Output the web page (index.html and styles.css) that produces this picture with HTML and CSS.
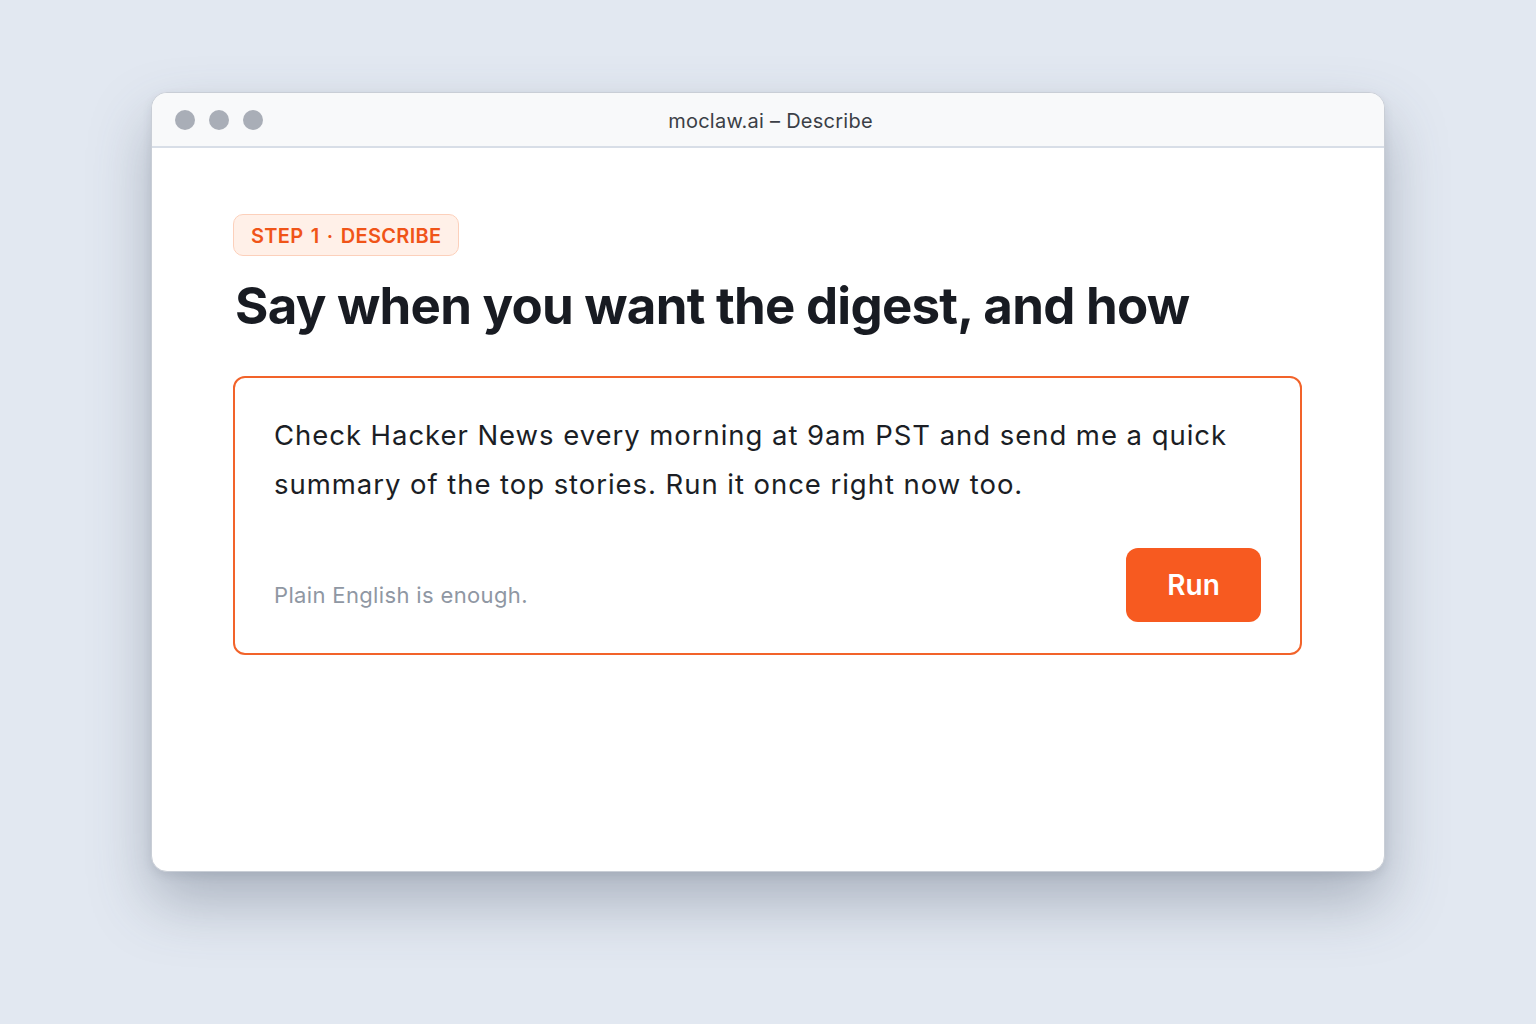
FILE: index.html
```html
<!DOCTYPE html>
<html lang="en">
<head>
    <meta charset="UTF-8">
    <meta name="viewport" content="width=device-width, initial-scale=1.0">
    <title>moclaw.ai – Describe</title>
    <link rel="stylesheet" href="styles.css">
</head>
<body>
    <div class="window">
        <div class="titlebar">
            <div class="dots">
                <span class="dot"></span>
                <span class="dot"></span>
                <span class="dot"></span>
            </div>
            <div class="title">moclaw.ai – Describe</div>
        </div>
        <div class="content">
            <div class="badge">STEP 1 · DESCRIBE</div>
            <h1 class="heading">Say when you want the digest, and how</h1>
            <div class="prompt">
                <p class="prompt-text">Check Hacker News every morning at 9am PST and send me a quick summary of the top stories. Run it once right now too.</p>
                <div class="prompt-footer">
                    <span class="hint">Plain English is enough.</span>
                    <button class="run">Run</button>
                </div>
            </div>
        </div>
    </div>
</body>
</html>
```

FILE: styles.css
```css
* {
    box-sizing: border-box;
}
body {
    margin: 0;
    height: 100vh;
    background-color: #e2e8f1;
    font-family: Inter, "Noto Sans", sans-serif;
    padding-top: 92px;
}
.window {
    width: 1234px;
    height: 780px;
    margin: 0 auto 0 151px;
    background: #fff;
    border: 1px solid #c9ced6;
    border-radius: 16px;
    overflow: hidden;
    box-shadow: 0 30px 60px rgba(70, 80, 100, 0.35), 0 4px 10px rgba(70, 80, 100, 0.12);
}
.titlebar {
    position: relative;
    height: 55px;
    background: #f8f9fa;
    border-bottom: 2px solid #d8dee7;
    display: flex;
    align-items: center;
    justify-content: center;
}
.dots {
    position: absolute;
    left: 23px;
    top: 17px;
    display: flex;
    gap: 14px;
}
.dot {
    width: 20px;
    height: 20px;
    border-radius: 50%;
    background: #a9aeb7;
}
.title {
    font-size: 20px;
    letter-spacing: 0.25px;
    color: #3b3f46;
    margin: 2px 0 0 5px;
}
.content {
    padding: 66px 82px 0 81px;
}
.badge {
    display: inline-block;
    height: 42px;
    line-height: 37px;
    padding: 3px 17px 0;
    background: #fff0e8;
    border: 1px solid #fcd0bb;
    border-radius: 10px;
    color: #f05418;
    font-size: 20px;
    font-weight: 600;
    letter-spacing: 0.3px;
    word-spacing: 2px;
}
.heading {
    margin: 20px 0 0 2px;
    font-size: 51px;
    font-weight: 700;
    letter-spacing: -0.75px;
    color: #181b22;
    line-height: 60px;
}
.prompt {
    margin-top: 40px;
    width: 1069px;
    height: 279px;
    border: 2px solid #f2632a;
    border-radius: 12px;
    padding: 33px 39px 31px 39px;
    display: flex;
    flex-direction: column;
    justify-content: space-between;
}
.prompt-text {
    margin: 0;
    font-size: 27.5px;
    line-height: 49px;
    color: #1b1e25;
    letter-spacing: 0.95px;
}
.prompt-footer {
    display: flex;
    justify-content: space-between;
    align-items: flex-end;
}
.hint {
    font-size: 22px;
    letter-spacing: 0.35px;
    color: #8f97a3;
    margin-bottom: 14px;
}
.run {
    width: 135px;
    height: 74px;
    border: none;
    border-radius: 12px;
    background: #f75a20;
    color: #fff;
    font-family: Inter, "Noto Sans", sans-serif;
    font-size: 28px;
    font-weight: 600;
    cursor: pointer;
}
```
